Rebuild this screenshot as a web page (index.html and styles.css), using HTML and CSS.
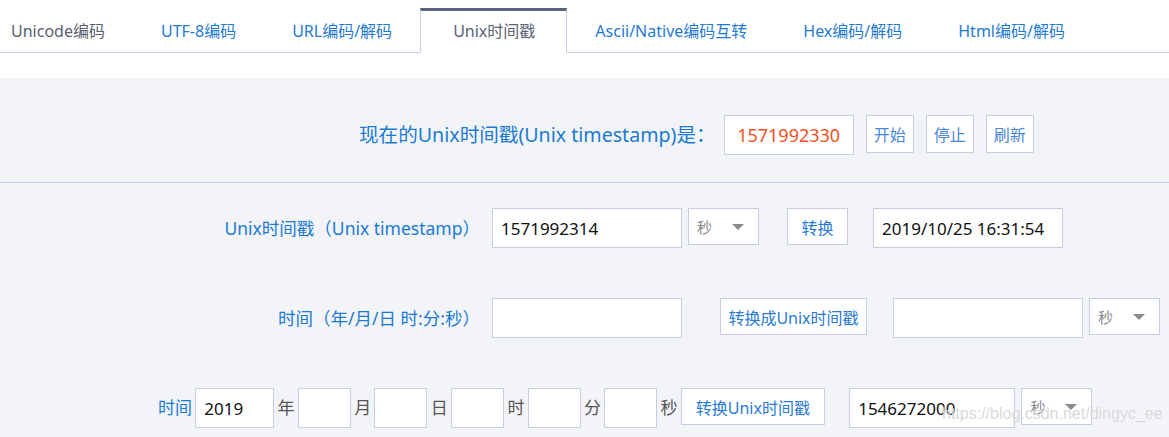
FILE: index.html
```html
<!DOCTYPE html>
<html lang="zh-CN">
<head>
    <meta charset="UTF-8">
    <meta name="viewport" content="width=device-width, initial-scale=1.0">
    <title>Unix时间戳</title>
    <link rel="stylesheet" href="styles.css">
</head>
<body>
    <ul class="tabs">
        <li class="visited"><a href="#">Unicode编码</a></li>
        <li><a href="#">UTF-8编码</a></li>
        <li><a href="#">URL编码/解码</a></li>
        <li class="active"><a href="#">Unix时间戳</a></li>
        <li><a href="#">Ascii/Native编码互转</a></li>
        <li><a href="#">Hex编码/解码</a></li>
        <li><a href="#">Html编码/解码</a></li>
    </ul>

    <div class="panel">
        <div class="now">
            <span class="now-label">现在的Unix时间戳(Unix timestamp)是：</span>
            <span class="now-value" id="now">1571992330</span>
            <button class="btn btn-small">开始</button>
            <button class="btn btn-small">停止</button>
            <button class="btn btn-small">刷新</button>
        </div>

        <div class="rows">
            <div class="row">
                <label class="row-label">Unix时间戳（Unix timestamp）</label>
                <input class="field field-wide" type="text" value="1571992314">
                <div class="select select-first"><span>秒</span><i class="caret"></i></div>
                <button class="btn btn-convert">转换</button>
                <input class="field field-result" type="text" value="2019/10/25 16:31:54">
            </div>

            <div class="row">
                <label class="row-label">时间（年/月/日 时:分:秒）</label>
                <input class="field field-wide" type="text" value="">
                <button class="btn btn-to-unix">转换成Unix时间戳</button>
                <input class="field field-wide field-unix" type="text" value="">
                <div class="select"><span>秒</span><i class="caret"></i></div>
            </div>

            <div class="row row-parts">
                <span class="parts-label">时间</span>
                <input class="field field-year" type="text" value="2019">
                <span class="unit">年</span>
                <input class="field field-part" type="text">
                <span class="unit">月</span>
                <input class="field field-part" type="text">
                <span class="unit">日</span>
                <input class="field field-part" type="text">
                <span class="unit">时</span>
                <input class="field field-part" type="text">
                <span class="unit">分</span>
                <input class="field field-part" type="text">
                <span class="unit">秒</span>
                <button class="btn btn-parts">转换Unix时间戳</button>
                <input class="field field-stamp" type="text" value="1546272000">
                <div class="select"><span>秒</span><i class="caret"></i></div>
            </div>
        </div>

        <div class="watermark">https://blog.csdn.net/dingyc_ee</div>
    </div>
</body>
</html>
```

FILE: styles.css
```css
* {
    margin: 0;
    padding: 0;
    box-sizing: border-box;
}

body {
    font-family: "Noto Sans", "Noto Sans CJK SC", sans-serif;
    color: #333;
    background: #fff;
    overflow: hidden;
}

a {
    text-decoration: none;
}

/* tabs */
.tabs {
    display: flex;
    list-style: none;
    padding-top: 8px;
    border-bottom: 1px solid #c6cde0;
}

.tabs li {
    margin-bottom: -1px;
}

.tabs a {
    display: block;
    padding: 0 27px;
    height: 45px;
    line-height: 41px;
    font-size: 16px;
    color: #1f7bd2;
    border-top: 3px solid transparent;
    border-left: 1px solid transparent;
    border-right: 1px solid transparent;
    border-bottom: 1px solid transparent;
}

.tabs li:first-child a {
    padding-left: 10px;
}

.tabs .visited a {
    color: #5b6070;
}

.tabs .active a {
    padding: 0 31px 0 32px;
    color: #5a6275;
    background: #fff;
    border-top-color: #58647f;
    border-left-color: #c6cde0;
    border-right-color: #c6cde0;
    border-bottom-color: #fff;
}

/* panel */
.panel {
    position: relative;
    margin-top: 25px;
    background: #f3f4f8;
    padding-bottom: 10px;
}

.now {
    display: flex;
    align-items: flex-start;
    padding: 37px 0 27px 359px;
    border-bottom: 1px solid #c6cde0;
}

.now-label {
    line-height: 40px;
    font-size: 19.6px;
    color: #1b7bd3;
}

.now-value {
    margin-left: 8px;
    width: 130px;
    height: 40px;
    line-height: 38px;
    text-align: center;
    font-size: 18px;
    color: #f4511e;
    background: #fff;
    border: 1px solid #c6cde0;
}

.btn {
    height: 37px;
    font-family: inherit;
    font-size: 16px;
    color: #2a7bd5;
    background: #fff;
    border: 1px solid #c6cde0;
    cursor: pointer;
}

.btn-small {
    width: 48px;
    height: 38px;
    margin-left: 12px;
    color: #4a86dc;
}

/* conversion rows */
.rows {
    padding-top: 25px;
}

.row {
    display: flex;
    align-items: flex-start;
    margin-bottom: 50px;
}

.row:last-child {
    margin-bottom: 0;
}

.row-label {
    width: 480px;
    margin-right: 12px;
    line-height: 40px;
    text-align: right;
    font-size: 17.5px;
    color: #1b7bd3;
}

.field {
    height: 40px;
    padding: 0 8px;
    font-family: inherit;
    font-size: 17px;
    color: #111;
    background: #fff;
    border: 1px solid #c6cde0;
    outline: none;
}

.field-wide {
    width: 190px;
}

.field-result {
    width: 190px;
    margin-left: 25px;
}

.field-unix {
    margin-left: 26px;
}

.select {
    display: flex;
    align-items: center;
    justify-content: space-between;
    width: 71px;
    height: 37px;
    margin-left: 6px;
    padding: 0 14px 0 8px;
    font-size: 15px;
    color: #8a8a8a;
    background: #fff;
    border: 1px solid #c6cde0;
}

.caret {
    width: 0;
    height: 0;
    border-left: 6px solid transparent;
    border-right: 6px solid transparent;
    border-top: 6px solid #8c8c8c;
}

.btn-convert {
    width: 61px;
    margin-left: 28px;
}

.btn-to-unix {
    width: 147px;
    margin-left: 38px;
}

/* date parts row */
.row-parts {
    gap: 3.3px;
    padding-left: 158px;
}

.parts-label,
.unit {
    line-height: 40px;
    font-size: 17px;
}

.parts-label {
    color: #1b7bd3;
}

.unit {
    color: #555;
}

.field-year {
    width: 79px;
}

.field-part {
    width: 53px;
}

.btn-parts {
    width: 144px;
}

.field-stamp {
    width: 166px;
    margin-left: 21px;
}

.row-parts .select {
    margin-left: 3px;
}

.watermark {
    position: absolute;
    left: 942px;
    top: 327px;
    font-family: "Liberation Sans", sans-serif;
    font-size: 16px;
    color: rgba(190, 190, 190, 0.6);
    text-shadow: 0 0 1px rgba(255, 255, 255, 0.9);
    pointer-events: none;
}
```
